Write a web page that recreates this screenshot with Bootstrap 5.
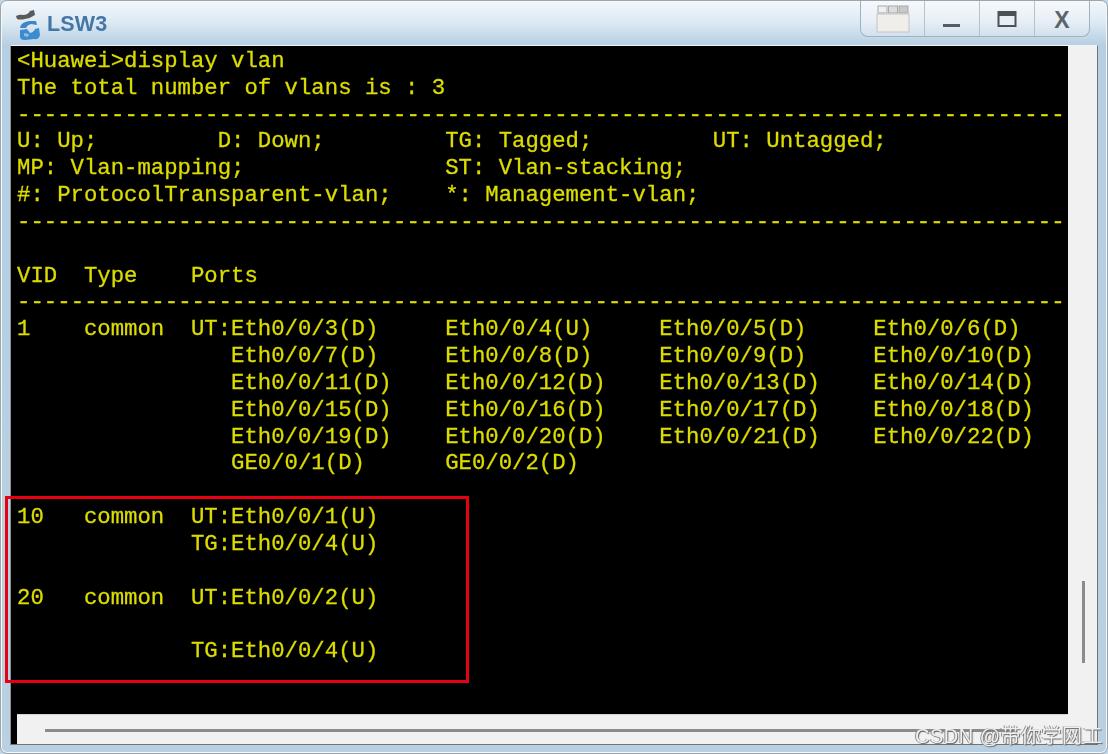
<!DOCTYPE html>
<html lang="en">
<head>
<meta charset="utf-8">
<title>LSW3</title>
<link href="https://cdn.jsdelivr.net/npm/bootstrap@5.3.0/dist/css/bootstrap.min.css" rel="stylesheet">
<style>
html,body{margin:0;height:754px;overflow:hidden;background:#c3d6e6}
.win-frame{position:relative;width:1108px;height:754px;overflow:hidden;border:1px solid #9aa5ae;border-radius:7px;background:linear-gradient(180deg,#f2f7fb 0,#dce9f3 22px,#b6cfe2 44px,#b9d0e2 100%);padding:0 9px 8px 9px;box-shadow:inset 0 0 0 1px #f3f8fb}
.title-row{height:44px;padding-left:5px}
.title-text{font:700 21.5px/1 "Liberation Sans",sans-serif;color:#4477a8;margin-left:2px;letter-spacing:.2px;padding-top:4px;filter:blur(.4px)}
.ctrl-group{width:230px;height:36px;margin-right:8px;margin-top:-8px;border:1px solid #9fb2c0;border-top:0;border-radius:0 0 8px 8px;background:linear-gradient(180deg,#f6f9fc 0,#e6eef6 60%,#d3e0ec 100%);overflow:hidden}
.ctrl-btn{height:100%;border-left:1px solid #b4c3cf}
.ctrl-btn:first-child{border-left:0;width:63px}
.ctrl-btn.w55{width:55px}
.ctrl-x{font:700 23px/1 "Liberation Sans",sans-serif;color:#5c6469;padding-top:3px}
.client{height:700px;border:1px solid #6f7478;border-top-color:#f0f4f7;border-left-color:#8c9297;background:#f1f1f1;display:grid;grid-template-columns:1057px 1fr;grid-template-rows:668px 1fr}
.term{grid-column:1;grid-row:1;background:#000;overflow:hidden;padding:2px 0 0 6px}
.term-text{margin:0;overflow:hidden;font:400 22.3px/26.83px "Liberation Mono",monospace;color:#dcdc00;-webkit-text-stroke:.3px #dcdc00;filter:blur(.4px);white-space:pre}
.dash-line{letter-spacing:.05px}
.vtrack{grid-column:2;grid-row:1 / span 2;background:#f1f1f1;display:flex;justify-content:center;align-items:flex-end;padding:0 0 81px 2px}
.vthumb{width:3px;height:82px;background:#8b8b8b}
.hcell{grid-column:1;grid-row:2;background:#000;padding-left:6px}
.htrack{background:#f1f1f1;height:100%;padding:14px 0 0 28px;border-top:1px solid #d5d5d5}
.hthumb{height:3px;background:#8b8b8b;width:972px}
.red-box{position:absolute;left:4px;top:495px;width:464px;height:187px;border:3px solid #e60012;pointer-events:none}
.wm{position:absolute;right:4px;bottom:7px;font:400 20px/1 "Liberation Sans","Noto Sans CJK SC",sans-serif;color:#eef1f3;text-shadow:1px 1px 1px #666,-1px 0 0 #8d8d8d;letter-spacing:.5px;white-space:nowrap;filter:blur(.4px)}
</style>
</head>
<body>
<div class="win-frame">
  <div class="title-row d-flex align-items-center justify-content-between">
    <div class="d-flex align-items-center">
      <svg width="30" height="32" viewBox="0 0 30 32" class="mt-1" aria-hidden="true">
        <path d="M1 7 Q5 5 8 6 Q13 6 15 2 L19 1 L20 6 Q16 9 10 10 Q5 11 2 10Z" fill="#5a5a5a"/>
        <path d="M21 12 L14 12 Q8 13 6 16 L5 19 L11 19 Q12 16 16 15 L22 16Z" fill="#3d85c6"/>
        <path d="M5 21 L12 20 L15 24 Q19 23 20 20 L24 19 L25 26 Q24 31 19 30 L10 31 Q4 31 5 26Z" fill="#3b8bd0"/>
        <path d="M9 24 L14 25 L13 28 L9 27Z" fill="#8fbde0"/>
      </svg>
      <span class="title-text">LSW3</span>
    </div>
    <div class="ctrl-group d-flex">
      <div class="ctrl-btn d-flex align-items-center justify-content-center">
        <svg width="34" height="30" viewBox="0 0 34 30" aria-hidden="true">
          <rect x="2" y="2" width="9" height="7" fill="#efefef" stroke="#a9a9a9"/>
          <rect x="12.500" y="2" width="9" height="7" fill="#dcdcdc" stroke="#a9a9a9"/>
          <rect x="23" y="2" width="9" height="7" fill="#c8c8c8" stroke="#a9a9a9"/>
          <rect x="1" y="10" width="32" height="18" fill="#f0eeea" stroke="#c4c4c4"/>
        </svg>
      </div>
      <div class="ctrl-btn w55 d-flex align-items-end justify-content-center">
        <svg width="20" height="16" viewBox="0 0 20 16" aria-hidden="true"><rect x="1" y="4" width="17" height="3" fill="#555d63"/></svg>
      </div>
      <div class="ctrl-btn w55 d-flex align-items-center justify-content-center">
        <svg width="20" height="18" viewBox="0 0 20 18" aria-hidden="true"><rect x="1.500" y="2" width="17" height="14" fill="#e8eef3" stroke="#4b5257" stroke-width="2"/><rect x="1" y="1" width="18" height="5" fill="#4b5257"/></svg>
      </div>
      <div class="ctrl-btn flex-grow-1 d-flex align-items-center justify-content-center"><span class="ctrl-x">X</span></div>
    </div>
  </div>
  <div class="client">
    <div class="term"><pre class="term-text">&lt;Huawei&gt;display vlan
The total number of vlans is : 3
<span class="dash-line">------------------------------------------------------------------------------</span>
U: Up;         D: Down;         TG: Tagged;         UT: Untagged;
MP: Vlan-mapping;               ST: Vlan-stacking;
#: ProtocolTransparent-vlan;    *: Management-vlan;
<span class="dash-line">------------------------------------------------------------------------------</span>

VID  Type    Ports
<span class="dash-line">------------------------------------------------------------------------------</span>
1    common  UT:Eth0/0/3(D)     Eth0/0/4(U)     Eth0/0/5(D)     Eth0/0/6(D)
                Eth0/0/7(D)     Eth0/0/8(D)     Eth0/0/9(D)     Eth0/0/10(D)
                Eth0/0/11(D)    Eth0/0/12(D)    Eth0/0/13(D)    Eth0/0/14(D)
                Eth0/0/15(D)    Eth0/0/16(D)    Eth0/0/17(D)    Eth0/0/18(D)
                Eth0/0/19(D)    Eth0/0/20(D)    Eth0/0/21(D)    Eth0/0/22(D)
                GE0/0/1(D)      GE0/0/2(D)

10   common  UT:Eth0/0/1(U)
             TG:Eth0/0/4(U)

20   common  UT:Eth0/0/2(U)

             TG:Eth0/0/4(U)</pre></div>
    <div class="vtrack"><div class="vthumb"></div></div>
    <div class="hcell"><div class="htrack"><div class="hthumb"></div></div></div>
  </div>
  <div class="red-box"></div>
  <div class="wm">CSDN @带你学网工</div>
</div>
<script src="https://cdn.jsdelivr.net/npm/bootstrap@5.3.0/dist/js/bootstrap.bundle.min.js"></script>
</body>
</html>
